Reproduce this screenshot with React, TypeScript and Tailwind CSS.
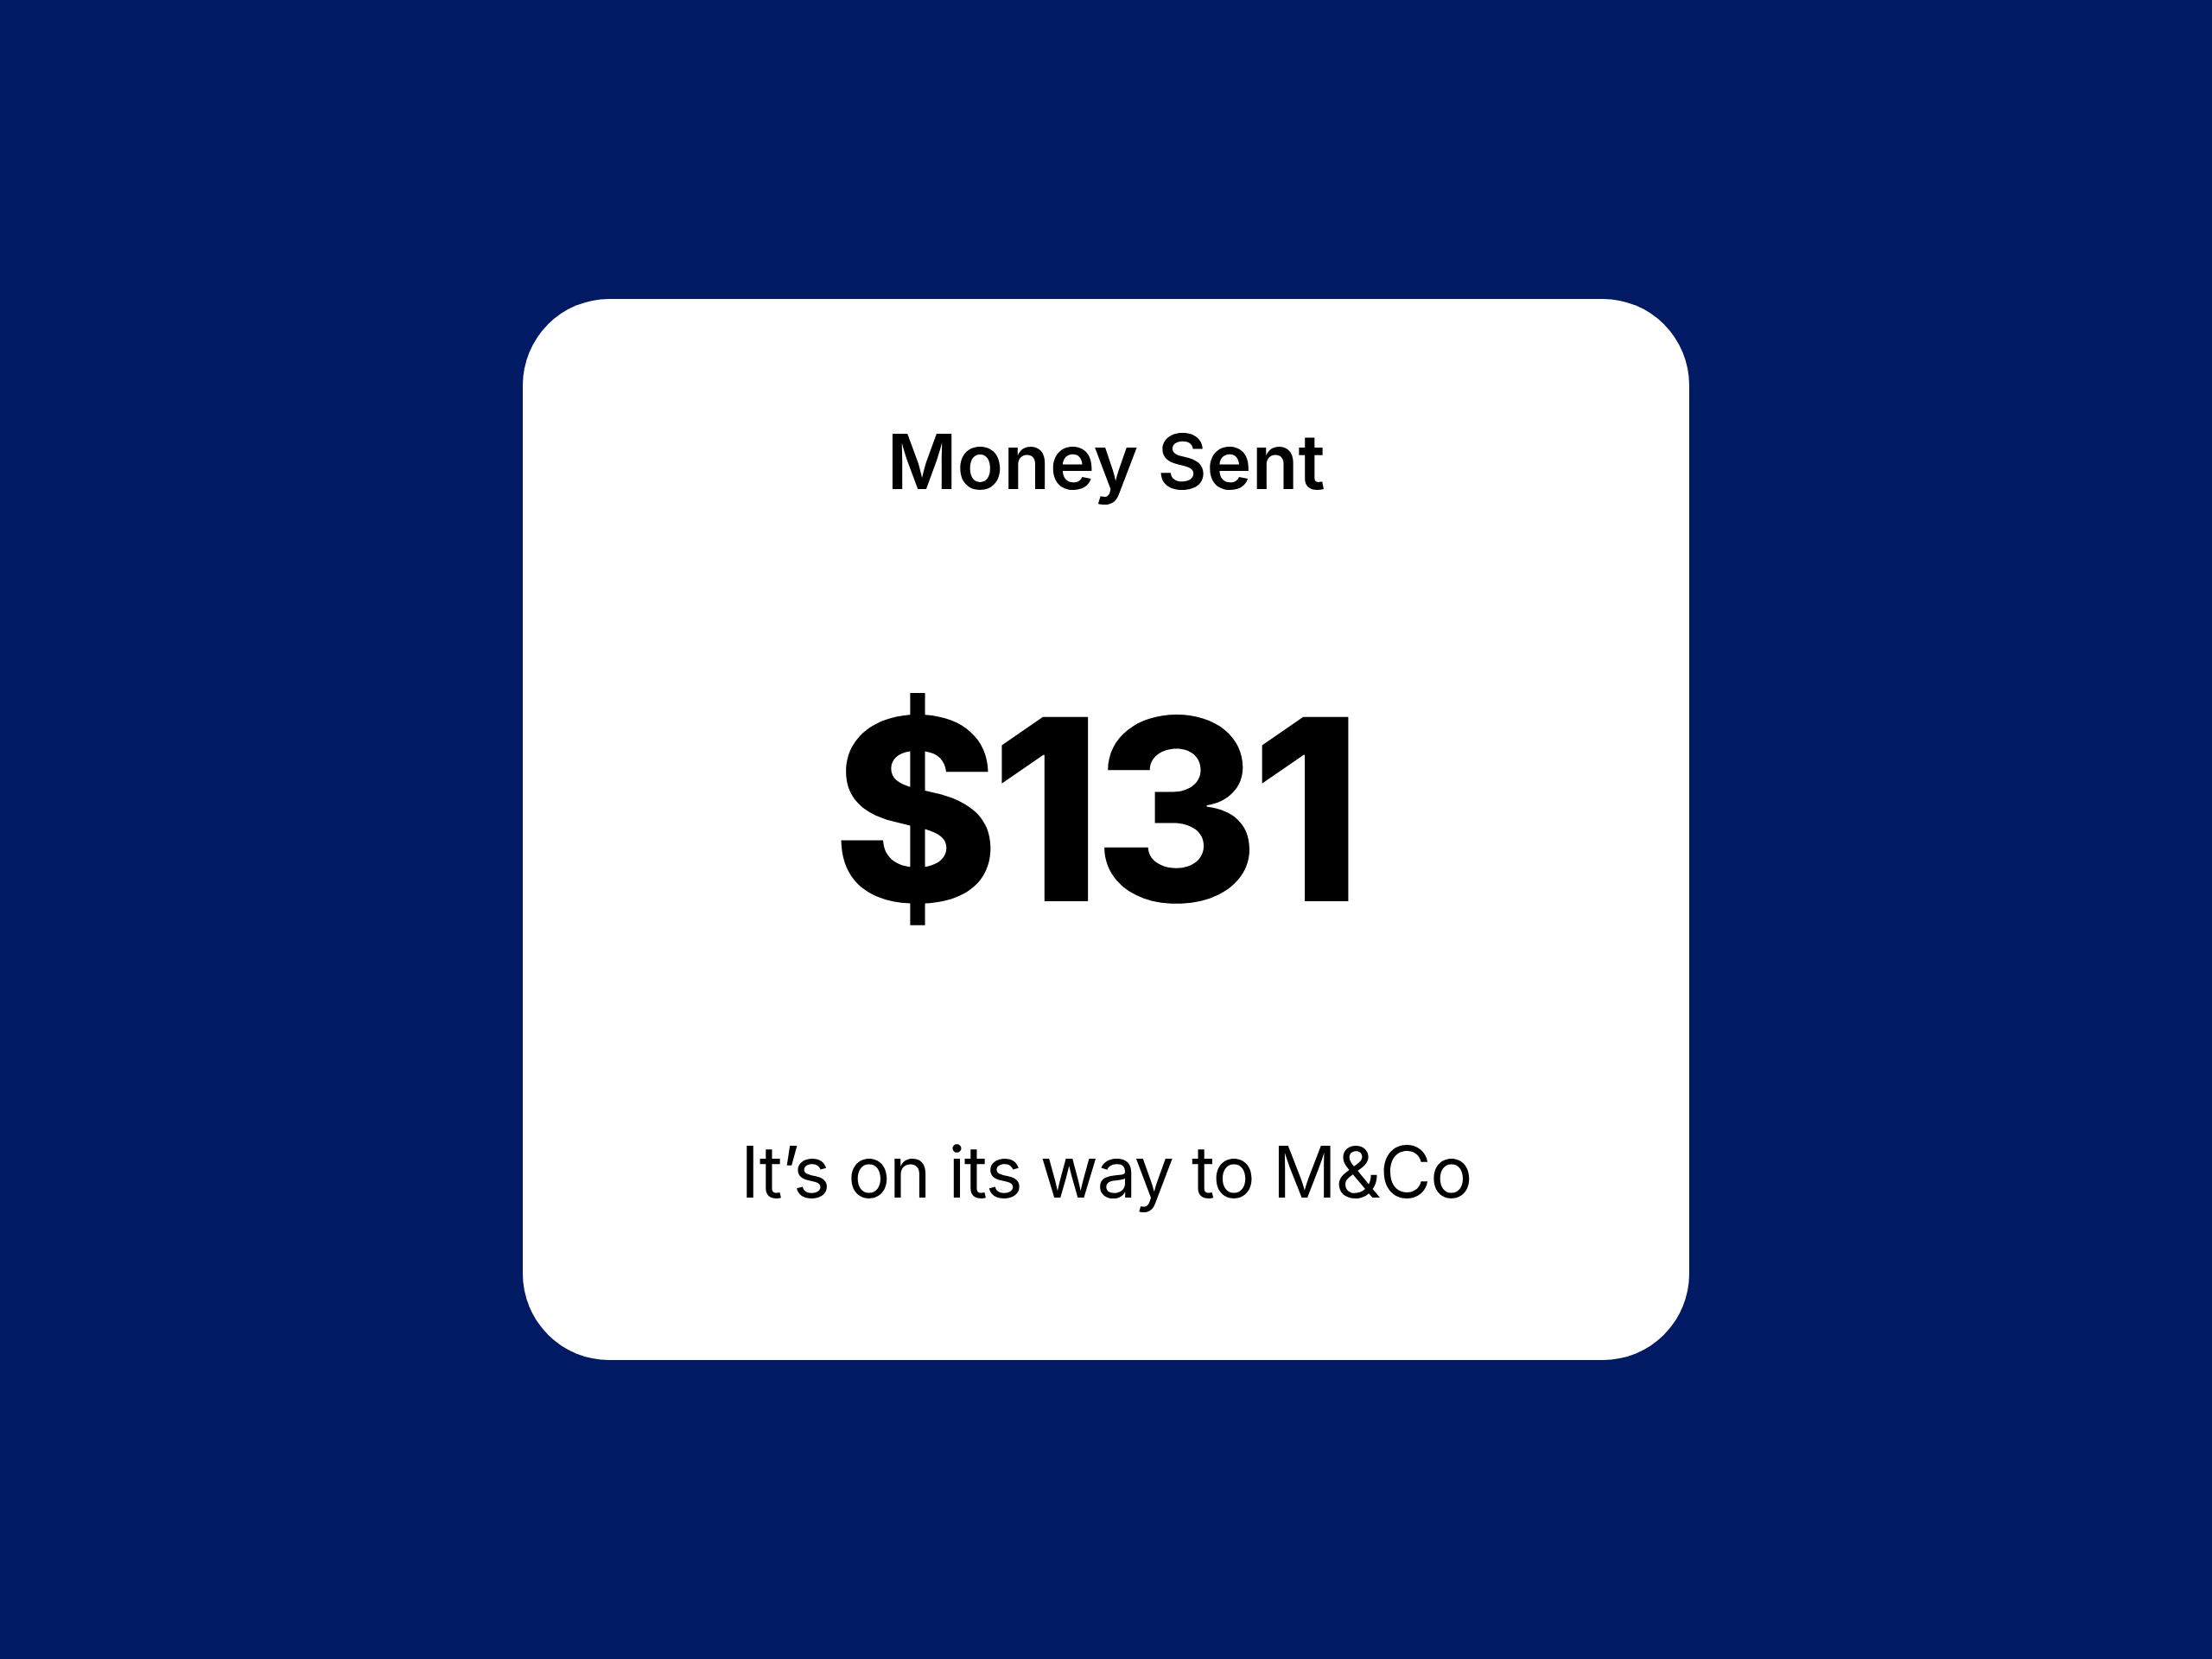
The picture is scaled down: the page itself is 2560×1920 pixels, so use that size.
import React from 'react';

export default function App() {
  return (
    <div className="w-full h-[1920px] bg-[#001a63] flex items-center justify-center">
      <div className="w-[1350px] h-[1228px] bg-white rounded-[100px] flex flex-col items-center pt-[144px] text-black font-['Inter','Liberation_Sans',sans-serif]">
        <h1 className="text-[88px] leading-none font-semibold">Money Sent</h1>
        <div className="mt-[212px] pr-[30px] text-[293px] leading-none font-extrabold tracking-[-0.035em]">$131</div>
        <p className="mt-[233px] text-[82px] leading-none font-normal tracking-[-0.018em]">It’s on its way to M&amp;Co</p>
      </div>
    </div>
  );
}
